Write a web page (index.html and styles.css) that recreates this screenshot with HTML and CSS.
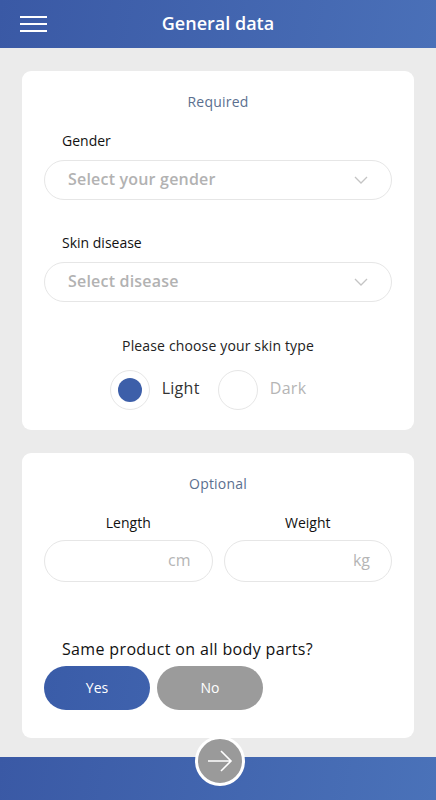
FILE: index.html
```html
<!DOCTYPE html>
<html lang="en">
<head>
    <meta charset="UTF-8">
    <meta name="viewport" content="width=device-width, initial-scale=1.0">
    <title>General data</title>
    <link rel="stylesheet" href="styles.css">
</head>
<body>
    <header class="top-bar">
        <button class="menu-button" aria-label="Menu">
            <span></span><span></span><span></span>
        </button>
        <h1 class="top-title">General data</h1>
    </header>

    <main class="content">
        <section class="card">
            <h2 class="card-title">Required</h2>

            <label class="field-label">Gender</label>
            <div class="select-box">
                <span>Select your gender</span>
                <svg class="chevron" width="14" height="8" viewBox="0 0 14 8"><path d="M1 1l6 6 6-6" fill="none" stroke="#c4c4c4" stroke-width="1.3"/></svg>
            </div>

            <label class="field-label second">Skin disease</label>
            <div class="select-box">
                <span>Select disease</span>
                <svg class="chevron" width="14" height="8" viewBox="0 0 14 8"><path d="M1 1l6 6 6-6" fill="none" stroke="#c4c4c4" stroke-width="1.3"/></svg>
            </div>

            <p class="skin-question">Please choose your skin type</p>
            <div class="radio-row">
                <div class="radio-option">
                    <span class="radio checked"></span>
                    <span class="radio-label">Light</span>
                </div>
                <div class="radio-option">
                    <span class="radio"></span>
                    <span class="radio-label muted">Dark</span>
                </div>
            </div>
        </section>

        <section class="card optional">
            <h2 class="card-title">Optional</h2>
            <div class="measure-row">
                <div class="measure">
                    <label class="measure-label">Length</label>
                    <div class="measure-input">cm</div>
                </div>
                <div class="measure">
                    <label class="measure-label">Weight</label>
                    <div class="measure-input">kg</div>
                </div>
            </div>

            <p class="same-question">Same product on all body parts?</p>
            <div class="choice-row">
                <button class="choice yes">Yes</button>
                <button class="choice no">No</button>
            </div>
        </section>
    </main>

    <footer class="bottom-bar">
        <button class="next-button" aria-label="Next">
            <svg width="26" height="22" viewBox="0 0 26 22"><path d="M1 11h23M14 1l10 10-10 10" fill="none" stroke="#fff" stroke-width="1.6"/></svg>
        </button>
    </footer>
</body>
</html>
```

FILE: styles.css
```css
* {
    box-sizing: border-box;
}

body {
    margin: 0;
    min-height: 100vh;
    display: flex;
    flex-direction: column;
    background-color: #ebebeb;
    font-family: "Open Sans", Lato, sans-serif;
    color: #222;
}

.top-bar {
    height: 48px;
    display: flex;
    align-items: center;
    justify-content: center;
    position: relative;
    background: linear-gradient(100deg, #3a59a5 0%, #4a70b8 100%);
}

.menu-button {
    position: absolute;
    left: 20px;
    top: 16px;
    width: 27px;
    padding: 0;
    background: none;
    border: none;
    display: flex;
    flex-direction: column;
    gap: 5px;
}

.menu-button span {
    display: block;
    height: 2px;
    background-color: #fff;
}

.top-title {
    margin: 0 0 2px;
    color: #fff;
    font-size: 18px;
    font-weight: 600;
}

.content {
    flex: 1;
    padding: 23px 22px 19px;
    display: flex;
    flex-direction: column;
    gap: 23px;
}

.card {
    background-color: #fff;
    border-radius: 9px;
    padding: 21px 22px 20px;
    display: flex;
    flex-direction: column;
}

.card.optional {
    padding-bottom: 28px;
}

.card-title {
    margin: 0;
    text-align: center;
    font-size: 14px;
    line-height: 20px;
    font-weight: 400;
    color: #5b6f8f;
    letter-spacing: 0.2px;
}

.field-label {
    margin: 19px 0 9px 18px;
    font-size: 14px;
    line-height: 20px;
    color: #111;
}

.field-label.second {
    margin-top: 33px;
}

.select-box {
    height: 40px;
    border: 1px solid #e6e6e6;
    border-radius: 20px;
    display: flex;
    align-items: center;
    justify-content: space-between;
    padding: 0 23px 2px 23px;
    font-size: 16px;
    font-weight: 600;
    color: #b2b2b2;
    letter-spacing: 0.2px;
}

.chevron {
    margin-top: 2px;
}

.skin-question {
    margin: 34px 0 14px;
    text-align: center;
    font-size: 14px;
    line-height: 20px;
    color: #222;
    letter-spacing: 0.15px;
}

.radio-row {
    display: flex;
    justify-content: center;
    gap: 18px;
    padding-right: 20px;
}

.radio-option {
    display: flex;
    align-items: center;
    gap: 12px;
}

.radio {
    width: 40px;
    height: 40px;
    border-radius: 50%;
    border: 1px solid #e6e6e6;
    display: flex;
    align-items: center;
    justify-content: center;
}

.radio.checked::after {
    content: "";
    width: 24px;
    height: 24px;
    border-radius: 50%;
    background-color: #3d5fa9;
}

.radio-label {
    font-size: 16px;
    color: #333;
    margin-top: -4px;
    letter-spacing: 0.3px;
}

.radio-label.muted {
    color: #b5b5b5;
}

.measure-row {
    display: flex;
    gap: 11px;
    margin-top: 19px;
}

.measure {
    flex: 1;
    display: flex;
    flex-direction: column;
    gap: 7px;
}

.measure-label {
    text-align: center;
    font-size: 14px;
    line-height: 20px;
    color: #111;
}

.measure-input {
    height: 42px;
    border: 1px solid #e6e6e6;
    border-radius: 21px;
    display: flex;
    align-items: center;
    justify-content: flex-end;
    padding: 0 21px 2px 0;
    font-size: 16px;
    color: #b5b5b5;
}

.same-question {
    margin: 56px 0 6px 18px;
    font-size: 16px;
    line-height: 22px;
    color: #111;
    letter-spacing: 0.35px;
}

.choice-row {
    display: flex;
    gap: 7px;
}

.choice {
    width: 106px;
    height: 44px;
    border: none;
    border-radius: 22px;
    color: #fff;
    font-family: inherit;
    font-size: 14px;
    padding-bottom: 3px;
}

.choice.yes {
    background: linear-gradient(100deg, #3a5ca8, #3f62ad);
}

.choice.no {
    background-color: #9b9b9b;
}

.bottom-bar {
    height: 43px;
    position: relative;
    background: linear-gradient(100deg, #3a59a5 0%, #4a72b9 100%);
}

.next-button {
    position: absolute;
    left: 195px;
    top: -21px;
    width: 50px;
    height: 50px;
    border-radius: 50%;
    border: 3px solid #fff;
    background-color: #9a9a9a;
    display: flex;
    align-items: center;
    justify-content: center;
    padding: 0;
}
```
